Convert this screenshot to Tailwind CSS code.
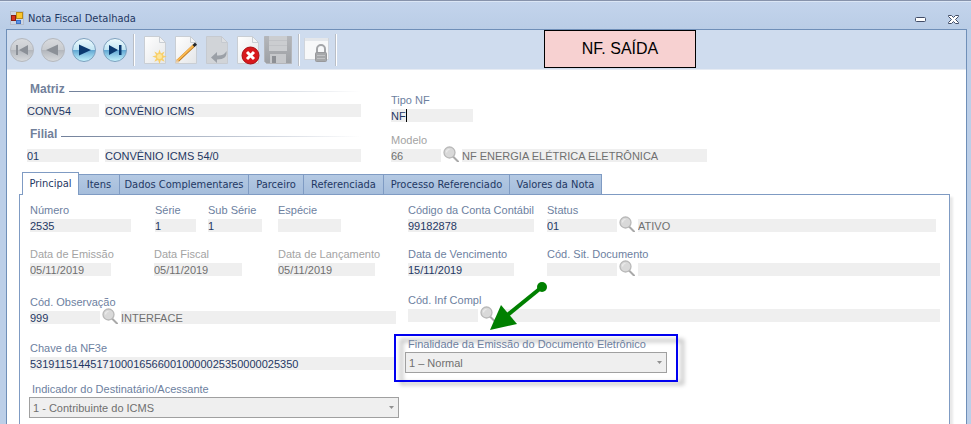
<!DOCTYPE html>
<html lang="pt-BR">
<head>
    <meta charset="UTF-8">
    <meta name="viewport" content="width=device-width, initial-scale=1.0">
    <title>Nota Fiscal Detalhada</title>
    <script src="https://cdn.jsdelivr.net/npm/@tailwindcss/browser@4"></script>
</head>
<body class="min-h-screen flex flex-col bg-[#bccfe8] border-t border-[#8793ab] font-['Liberation_Sans',Arial,sans-serif] text-[11px] leading-4 text-[#1f3864] whitespace-nowrap">

    <!-- Shared icons -->
    <svg class="absolute w-0 h-0" aria-hidden="true">
        <defs>
            <linearGradient id="gray-ball" x1="0" y1="0" x2="0" y2="1">
                <stop offset="0" stop-color="#d9dbde" /><stop offset=".48" stop-color="#c9ccd0" /><stop offset=".52" stop-color="#b3b7bd" /><stop offset="1" stop-color="#d9dbde" />
            </linearGradient>
            <linearGradient id="blue-ball" x1="0" y1="0" x2="0" y2="1">
                <stop offset="0" stop-color="#eefafd" /><stop offset=".48" stop-color="#c3e6f4" /><stop offset=".52" stop-color="#63a9d4" /><stop offset="1" stop-color="#c8f6ff" />
            </linearGradient>
            <linearGradient id="paper" x1="0" y1="0" x2="1" y2="1">
                <stop offset="0" stop-color="#ffffff" /><stop offset="1" stop-color="#e4e6e8" />
            </linearGradient>
            <linearGradient id="metal" x1="0" y1="0" x2="0" y2="1">
                <stop offset="0" stop-color="#b4b6ba" /><stop offset="1" stop-color="#9da0a4" />
            </linearGradient>
            <symbol id="lens" viewBox="0 0 16 16">
                <path d="M10 10.500L15 15.500" stroke="#a9a9a9" stroke-width="2" stroke-linecap="round" />
                <circle cx="6.500" cy="6.500" r="5.500" fill="#d9d9d9" stroke="#b9b9b9" stroke-width="1.300" />
                <path d="M3.500 6.500a3 3 0 0 1 3-3" stroke="#ececec" stroke-width="1.200" fill="none" />
            </symbol>
            <symbol id="page" viewBox="0 0 24 30">
                <path d="M1.500 1.500h15l6 6v21h-21z" fill="url(#paper)" stroke="#c9ced4" />
                <path d="M16.500 1.500v6h6z" fill="#f3f4f5" stroke="#c9ced4" />
            </symbol>
        </defs>
    </svg>

    <!-- Title bar -->
    <header class="h-7 flex items-center pl-[10px] pr-3 border-t border-[#dbe6f5] bg-linear-to-b from-[#c3d4ec] to-[#bacde6]">
        <svg class="w-[14px] h-[14px] mt-[5px]" viewBox="0 0 14 14">
            <rect x=".5" y=".5" width="13" height="13" fill="#ccd5e3" stroke="#b3bccb" />
            <rect x="1.500" y="4.500" width="4" height="5" fill="#d8331c" stroke="#8c1c12" />
            <rect x="6.500" y="1.500" width="6" height="6" fill="#fbc52c" stroke="#b98a17" />
            <rect x="6.500" y="9.500" width="4" height="3" fill="#5a93e8" stroke="#3d6fc4" />
        </svg>
        <h1 class="ml-1 mt-[7px] flex-1 font-['DejaVu_Sans_Condensed','DejaVu_Sans',sans-serif] text-[11px]">Nota Fiscal Detalhada</h1>
        <button class="mt-[7px]" aria-label="Minimizar">
            <svg class="w-[11px] h-[5px]" viewBox="0 0 11 5"><rect x=".5" y=".5" width="10" height="4" rx="1" fill="#fff" stroke="#414c66" /></svg>
        </button>
        <button class="ml-[22px] mt-[7px]" aria-label="Fechar">
            <svg class="w-[11px] h-[9px]" viewBox="0 0 11 9">
                <path d="M.5.5h3l2 2 2-2h3v1l-3 3 3 3v1h-3l-2-2-2 2h-3v-1l3-3-3-3z" fill="#fff" stroke="#414c66" />
            </svg>
        </button>
    </header>

    <div class="flex-1 flex flex-col mx-1 pl-[2px] bg-[#bccfe8]">
    <div class="flex-1 flex flex-col border border-b-0 border-[#6f8fb8] bg-white">

        <!-- Toolbar -->
        <div class="relative h-10 flex items-center pl-[3px] bg-[#cfdcee] border-b border-[#e6ebf3]">
            <div class="flex gap-[7px]">
                <button aria-label="Primeiro"><svg class="w-6 h-[26px]" viewBox="0 0 24 26">
                    <circle cx="12" cy="13" r="11.500" fill="url(#gray-ball)" stroke="#b4b8be" />
                    <path d="M6 8h2v10h-2zM18 8v10l-9-5z" fill="#8b9097" />
                </svg></button>
                <button aria-label="Anterior"><svg class="w-6 h-[26px]" viewBox="0 0 24 26">
                    <circle cx="12" cy="13" r="11.500" fill="url(#gray-ball)" stroke="#b4b8be" />
                    <path d="M17 7.500v11l-12-5.500z" fill="#8b9097" />
                </svg></button>
                <button aria-label="Próximo"><svg class="w-6 h-[26px]" viewBox="0 0 24 26">
                    <circle cx="12" cy="13" r="11.500" fill="url(#blue-ball)" stroke="#7d9fbd" />
                    <path d="M7 7.500v11l12-5.500z" fill="#0b3a70" />
                </svg></button>
                <button aria-label="Último"><svg class="w-6 h-[26px]" viewBox="0 0 24 26">
                    <circle cx="12" cy="13" r="11.500" fill="url(#blue-ball)" stroke="#7d9fbd" />
                    <path d="M6 8v10l9-5zM16 8h2.500v10h-2.500z" fill="#0b3a70" />
                </svg></button>
            </div>
            <span class="ml-[6px] w-[2px] h-8 bg-[#b9bec6] border-r border-white"></span>
            <div class="ml-2 flex gap-[7px]">
                <button aria-label="Novo"><svg class="w-6 h-[30px]" viewBox="0 0 24 30">
                    <use href="#page" />
                    <path d="M16.500 14.500l1.400 4 3.800-2-2 3.700 4 1.300-4 1.500 2 3.700-3.800-1.800-1.400 4-1.400-4-3.800 1.800 2-3.700-4-1.500 4-1.300-2-3.700 3.800 2z" fill="#f8cf68" />
                    <circle cx="16.500" cy="21.500" r="2.500" fill="#fde69b" />
                </svg></button>
                <button aria-label="Editar"><svg class="w-6 h-[30px]" viewBox="0 0 24 30">
                    <use href="#page" />
                    <path d="M3 26.500L20 10.500" stroke="#b97219" stroke-width="3" />
                    <path d="M3.500 25.500L20 10" stroke="#f9b850" stroke-width="2" />
                    <path d="M1.500 28l1-4 3 3z" fill="#e7c9a0" />
                    <path d="M19.500 11l2.500-2.300" stroke="#23262c" stroke-width="3" />
                </svg></button>
                <button aria-label="Desfazer"><svg class="w-6 h-[30px]" viewBox="0 0 24 30">
                    <path d="M1.500 1.500h15l6 6v21h-21z" fill="#d1d4d8" stroke="#c6cad0" />
                    <path d="M16.500 1.500v6h6z" fill="#dcdee1" stroke="#c6cad0" />
                    <path d="M6 22.500l6-5.500v3.500q7 .5 9.500-4.500 1 8.500-9.500 8.500v3.500z" fill="#9ba0a7" />
                </svg></button>
                <button aria-label="Excluir"><svg class="w-6 h-[30px]" viewBox="0 0 24 30">
                    <use href="#page" />
                    <circle cx="14.500" cy="20.500" r="8.500" fill="#d8181c" stroke="#a80f14" />
                    <path d="M11 17l7 7M18 17l-7 7" stroke="#fff" stroke-width="3" />
                </svg></button>
            </div>
            <button class="ml-[3px]" aria-label="Salvar"><svg class="w-[30px] h-[30px]" viewBox="0 0 30 30">
                <path d="M1.500 1.500h27v27h-25l-2-2z" fill="url(#metal)" stroke="#b4b6ba" />
                <rect x="6" y="1" width="18" height="15" fill="#cbcdd0" />
                <path d="M6 5.500h18M6 10.500h18" stroke="#c0c2c6" />
                <rect x="7" y="19" width="16" height="9" fill="#c6c8cb" />
                <rect x="9" y="21" width="4" height="7" fill="#8d9095" />
            </svg></button>
            <span class="ml-[5px] w-[2px] h-8 bg-[#b9bec6] border-r border-white"></span>
            <button class="ml-1" aria-label="Bloquear"><svg class="w-[26px] h-[26px]" viewBox="0 0 26 26">
                <rect x=".5" y="1.500" width="24" height="21" fill="#f7f8f9" stroke="#d0d5dc" />
                <rect x="1" y="1" width="23" height="3" fill="#e4e7eb" />
                <path d="M13 17v-5a4 4 0 0 1 8 0v5" fill="none" stroke="#a3a5a8" stroke-width="2" />
                <rect x="11.500" y="15.500" width="11" height="9" rx="1" fill="#a6a8aa" stroke="#98999c" />
                <path d="M13 18.500h8M13 21.500h8" stroke="#c2c3c5" />
            </svg></button>
            <span class="ml-[5px] w-[2px] h-8 bg-[#b9bec6] border-r border-white"></span>
            <!-- Operation type -->
            <div class="absolute left-[537px] top-0 w-[152px] h-[38px] flex items-center justify-center border border-black bg-[#f7d1d1] text-base text-black">NF. SAÍDA</div>
        </div>

        <!-- Header fields -->
        <div class="flex pl-5 pt-[11px]">
            <div class="w-[334px] flex flex-col gap-[9px]">
                <fieldset>
                    <div class="flex items-center gap-1 pl-[3px] mb-[7px]">
                        <label for="matriz" class="text-xs leading-4 font-bold text-[#71809a]">Matriz</label>
                        <span class="flex-1 h-px mt-1 bg-linear-to-r from-[#71809a] to-white"></span>
                    </div>
                    <div class="flex gap-[6px]">
                        <input id="matriz" value="CONV54" class="w-[72px] h-[13px] bg-[#efefef]">
                        <input aria-label="Nome da matriz" value="CONVÊNIO ICMS" class="flex-1 min-w-0 h-[13px] bg-[#efefef]">
                    </div>
                </fieldset>
                <fieldset>
                    <div class="flex items-center gap-1 pl-[3px] mb-[7px]">
                        <label for="filial" class="text-xs leading-4 font-bold text-[#71809a]">Filial</label>
                        <span class="flex-1 h-px mt-1 bg-linear-to-r from-[#71809a] to-white"></span>
                    </div>
                    <div class="flex gap-[6px]">
                        <input id="filial" value="01" class="w-[72px] h-[13px] bg-[#efefef]">
                        <input aria-label="Nome da filial" value="CONVÊNIO ICMS 54/0" class="flex-1 min-w-0 h-[13px] bg-[#efefef]">
                    </div>
                </fieldset>
            </div>
            <div class="ml-[30px] mt-[11px] flex flex-col gap-[10px]">
                <div class="flex flex-col gap-px">
                    <label for="tipo" class="text-[#6d7f9f]">Tipo NF</label>
                    <div class="relative flex">
                        <input id="tipo" value="NF" class="w-[82px] h-[13px] bg-[#efefef]">
                        <span class="absolute left-[15px] top-0 w-px h-[13px] bg-black"></span>
                    </div>
                </div>
                <div class="flex flex-col gap-px">
                    <label for="modelo" class="text-[#a3a3a3]">Modelo</label>
                    <div class="flex items-end text-[#6f6f6f]">
                        <input id="modelo" value="66" class="w-[50px] h-[13px] bg-[#efefef]">
                        <button class="ml-[2px] -mt-1" aria-label="Buscar modelo"><svg class="block w-4 h-4"><use href="#lens" /></svg></button>
                        <input aria-label="Descrição do modelo" value="NF ENERGIA ELÉTRICA ELETRÔNICA" class="ml-[3px] w-[245px] h-[13px] bg-[#efefef]">
                    </div>
                </div>
            </div>
        </div>

        <!-- Tabs -->
        <nav class="mt-[10px] ml-[15px] flex items-end font-['DejaVu_Sans_Condensed','DejaVu_Sans',sans-serif] text-[11px]">
            <button class="relative z-10 -mb-px w-[57px] h-[23px] border border-b-0 border-[#7f9bc3] bg-white">Principal</button>
            <button class="w-[41px] h-5 border-t border-r border-[#7f9bc3] bg-linear-to-b from-[#b4c9e3] to-[#a5bddb]">Itens</button>
            <button class="w-[129px] h-5 border-t border-r border-[#7f9bc3] bg-linear-to-b from-[#b4c9e3] to-[#a5bddb]">Dados Complementares</button>
            <button class="w-[55px] h-5 border-t border-r border-[#7f9bc3] bg-linear-to-b from-[#b4c9e3] to-[#a5bddb]">Parceiro</button>
            <button class="w-20 h-5 border-t border-r border-[#7f9bc3] bg-linear-to-b from-[#b4c9e3] to-[#a5bddb]">Referenciada</button>
            <button class="w-[126px] h-5 border-t border-r border-[#7f9bc3] bg-linear-to-b from-[#b4c9e3] to-[#a5bddb]">Processo Referenciado</button>
            <button class="w-[92px] h-5 border-t border-r border-[#7f9bc3] bg-linear-to-b from-[#b4c9e3] to-[#a5bddb]">Valores da Nota</button>
        </nav>

        <!-- Tab content -->
        <main class="flex-1 flex ml-3 mr-4 pl-[9px] pr-[9px] pt-[7px] pb-[6px] border border-b-0 border-[#7f9bc3] bg-white shadow-[3px_3px_2px_#e9e9e9]">
            <div class="w-[370px] flex flex-col text-[#6d7f9f]">
                <div class="flex pl-px">
                    <div class="w-[125px] flex flex-col gap-px">
                        <label for="numero">Número</label>
                        <input id="numero" value="2535" class="w-[101px] h-[13px] bg-[#efefef] text-[#1f3864]">
                    </div>
                    <div class="w-[53px] flex flex-col gap-px">
                        <label for="serie">Série</label>
                        <input id="serie" value="1" class="w-[41px] h-[13px] bg-[#efefef] text-[#1f3864]">
                    </div>
                    <div class="w-[70px] flex flex-col gap-px">
                        <label for="subserie">Sub Série</label>
                        <input id="subserie" value="1" class="w-[54px] h-[13px] bg-[#efefef] text-[#1f3864]">
                    </div>
                    <div class="flex flex-col gap-px">
                        <label for="especie">Espécie</label>
                        <input id="especie" class="w-[63px] h-[13px] bg-[#efefef]">
                    </div>
                </div>
                <div class="mt-[14px] flex pl-px text-[#a3a3a3]">
                    <div class="w-[124px] flex flex-col gap-px">
                        <label for="emissao">Data de Emissão</label>
                        <input id="emissao" value="05/11/2019" class="w-[81px] h-[13px] bg-[#efefef] text-[#6f6f6f]">
                    </div>
                    <div class="w-[124px] flex flex-col gap-px">
                        <label for="fiscal">Data Fiscal</label>
                        <input id="fiscal" value="05/11/2019" class="w-[88px] h-[13px] bg-[#efefef] text-[#6f6f6f]">
                    </div>
                    <div class="flex flex-col gap-px">
                        <label for="lancamento">Data de Lançamento</label>
                        <input id="lancamento" value="05/11/2019" class="w-[97px] h-[13px] bg-[#efefef] text-[#6f6f6f]">
                    </div>
                </div>
                <div class="mt-[18px] mr-[3px] pl-px flex flex-col gap-px">
                    <label for="observacao">Cód. Observação</label>
                    <div class="flex items-end">
                        <input id="observacao" value="999" class="w-[70px] h-[13px] bg-[#efefef] text-[#1f3864]">
                        <button class="ml-[2px] -mt-1" aria-label="Buscar observação"><svg class="block w-4 h-4"><use href="#lens" /></svg></button>
                        <input aria-label="Descrição da observação" value="INTERFACE" class="ml-[3px] flex-1 min-w-0 h-[13px] bg-[#efefef] text-[#6f6f6f]">
                    </div>
                </div>
                <div class="mt-4 mr-[3px] pl-px flex flex-col gap-px">
                    <label for="chave">Chave da NF3e</label>
                    <input id="chave" value="53191151445171000165660010000025350000025350" class="h-[13px] bg-[#efefef] text-[#1f3864]">
                </div>
                <div class="mt-[11px] flex flex-col">
                    <label for="indicador" class="pl-[3px]">Indicador do Destinatário/Acessante</label>
                    <div class="relative">
                        <select id="indicador" class="block w-full h-[21px] pl-[3px] appearance-none border border-[#a0a0a0] bg-[#efefef] text-[#6f6f6f]">
                            <option>1 - Contribuinte do ICMS</option>
                        </select>
                        <svg class="absolute right-[5px] top-[9px] w-[5px] h-[3px] pointer-events-none" viewBox="0 0 5 3"><path d="M0 0h5l-2.500 3z" fill="#909090" /></svg>
                    </div>
                </div>
            </div>

            <div class="relative ml-[9px] flex-1 min-w-0 flex flex-col text-[#6d7f9f]">
                <div class="flex mr-1">
                    <div class="w-[139px] flex flex-col gap-px">
                        <label for="conta">Código da Conta Contábil</label>
                        <input id="conta" value="99182878" class="w-[126px] h-[13px] bg-[#efefef] text-[#1f3864]">
                    </div>
                    <div class="flex-1 min-w-0 flex flex-col gap-px">
                        <label for="status">Status</label>
                        <div class="flex items-end">
                            <input id="status" value="01" class="w-[70px] h-[13px] bg-[#efefef] text-[#1f3864]">
                            <button class="ml-[2px] -mt-1" aria-label="Buscar status"><svg class="block w-4 h-4"><use href="#lens" /></svg></button>
                            <input aria-label="Descrição do status" value="ATIVO" class="ml-[3px] flex-1 min-w-0 h-[13px] bg-[#efefef] text-[#6f6f6f]">
                        </div>
                    </div>
                </div>
                <div class="mt-[14px] flex">
                    <div class="w-[139px] flex flex-col gap-px">
                        <label for="vencimento">Data de Vencimento</label>
                        <input id="vencimento" value="15/11/2019" class="w-[106px] h-[13px] bg-[#efefef] text-[#1f3864]">
                    </div>
                    <div class="flex-1 min-w-0 flex flex-col gap-px">
                        <label for="situacao">Cód. Sit. Documento</label>
                        <div class="flex items-end">
                            <input id="situacao" class="w-[70px] h-[13px] bg-[#efefef]">
                            <button class="ml-[2px] -mt-1" aria-label="Buscar situação"><svg class="block w-4 h-4"><use href="#lens" /></svg></button>
                            <input aria-label="Descrição da situação" class="ml-[3px] flex-1 min-w-0 h-[13px] bg-[#efefef]">
                        </div>
                    </div>
                </div>
                <div class="mt-4 flex flex-col gap-px">
                    <label for="inf">Cód. Inf Compl</label>
                    <div class="flex items-end">
                        <input id="inf" class="w-[70px] h-[13px] bg-[#efefef]">
                        <button class="ml-[2px] -mt-1" aria-label="Buscar informação"><svg class="block w-4 h-4"><use href="#lens" /></svg></button>
                        <input aria-label="Descrição da informação" class="ml-[3px] flex-1 min-w-0 h-[13px] bg-[#efefef]">
                    </div>
                </div>
                <div class="relative mt-[14px] -ml-[3px] w-[262px] flex flex-col">
                    <!-- Highlight frame -->
                    <div class="absolute -left-[5px] top-[3px] w-[284px] h-[46px] border-[3px] border-black/25 blur-[2px] pointer-events-none"></div>
                    <div class="absolute -left-[11px] -top-[2px] w-[284px] h-12 border-2 border-[#0000f0] pointer-events-none"></div>
                    <label for="finalidade" class="relative pl-[3px]">Finalidade da Emissão do Documento Eletrônico</label>
                    <div class="relative">
                        <select id="finalidade" class="block w-full h-[21px] pl-[3px] appearance-none border border-[#a0a0a0] bg-[#efefef] text-[#6f6f6f]">
                            <option>1 – Normal</option>
                        </select>
                        <svg class="absolute right-[5px] top-[9px] w-[5px] h-[3px] pointer-events-none" viewBox="0 0 5 3"><path d="M0 0h5l-2.500 3z" fill="#909090" /></svg>
                    </div>
                    <!-- Pointer arrow -->
                    <svg class="absolute left-[84px] -top-[56px] w-[60px] h-[52px] pointer-events-none" viewBox="0 0 60 52">
                        <path d="M53 7L16 37" stroke="#008000" stroke-width="4" />
                        <circle cx="53" cy="7" r="5" fill="#008000" />
                        <path d="M1 50L12 25L28 44z" fill="#008000" />
                    </svg>
                </div>
            </div>
        </main>
    </div>
    </div>

</body>
</html>
